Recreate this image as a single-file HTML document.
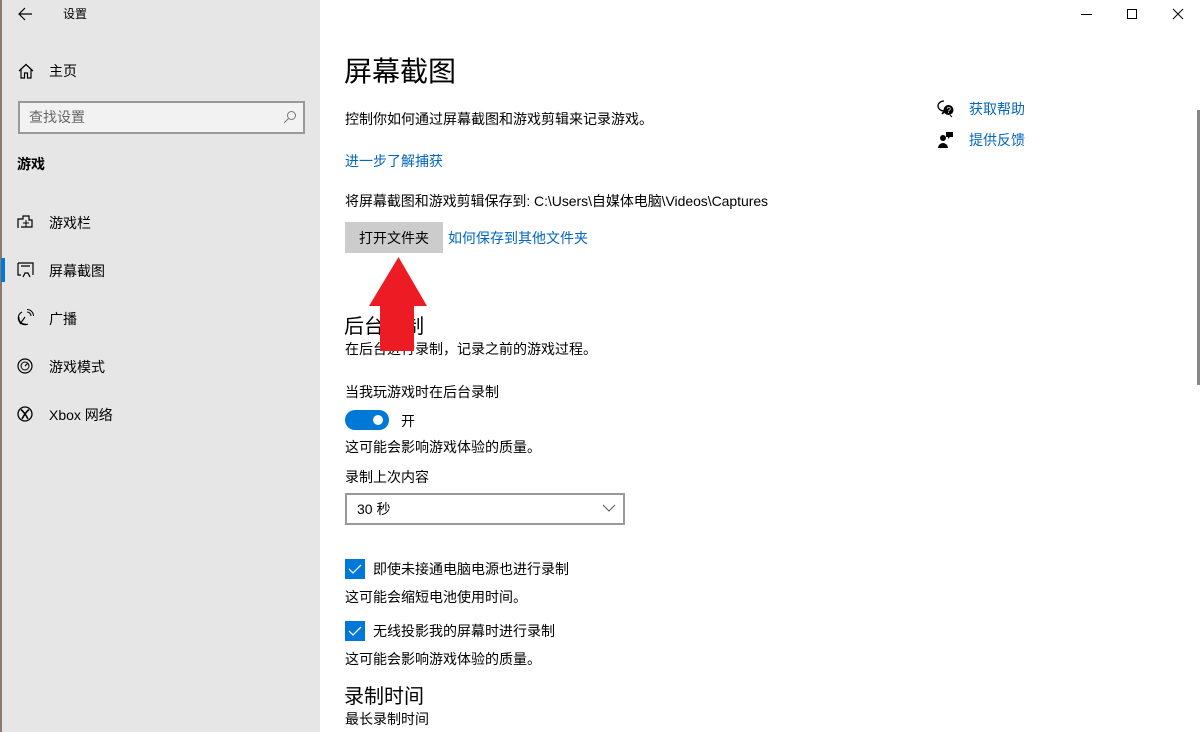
<!DOCTYPE html>
<html><head><meta charset="utf-8"><style>
*{margin:0;padding:0;box-sizing:border-box}
body{width:1202px;height:732px;overflow:hidden;background:#fff;font-family:"Liberation Sans","Noto Sans CJK SC",sans-serif;font-size:14px;color:#000;position:relative}
.a{position:absolute;white-space:nowrap;line-height:20px}
#side{position:absolute;left:0;top:0;width:320px;height:732px;background:#e6e6e6}
.blue{color:#0067c0}
.cb{position:absolute;width:20px;height:20px;background:#0078d7}
</style></head><body>
<div id="side">
  <div style="position:absolute;left:0;top:0;width:2px;height:732px;background:#8a7a70"></div>
  <svg class="a" style="left:17px;top:6px" width="16" height="16" viewBox="0 0 16 16"><path d="M15 8H2M8 2L2 8l6 6" fill="none" stroke="#000" stroke-width="1.2"/></svg>
  <div class="a" style="left:63px;top:4px;font-size:12px">设置</div>
  <svg class="a" style="left:18px;top:63px" width="16" height="16" viewBox="0 0 16 16"><path d="M1 8L8 1.5 15 8M3 6.5V15h3.5v-5h3v5H13V6.5" fill="none" stroke="#000" stroke-width="1.2"/></svg>
  <div class="a" style="left:49px;top:61px">主页</div>
  <div style="position:absolute;left:18px;top:101px;width:287px;height:33px;border:2px solid #999;background:#f2f2f2"></div>
  <div class="a" style="left:29px;top:107px;color:#666">查找设置</div>
  <svg class="a" style="left:283px;top:110px" width="14" height="14" viewBox="0 0 14 14"><circle cx="8.5" cy="5.5" r="4" fill="none" stroke="#777"/><path d="M5.5 8.5L1 13" stroke="#777"/></svg>
  <div class="a" style="left:17px;top:154px;font-weight:bold">游戏</div>
  <svg class="a" style="left:17px;top:214px" width="16" height="16" viewBox="0 0 16 16"><path d="M1 14V5h5V2h6v4h3v7H4" fill="none" stroke="#000" stroke-width="1.2"/><path d="M9 6v7M6 9h6" stroke="#000"/></svg>
  <div class="a" style="left:49px;top:213px">游戏栏</div>
  <div style="position:absolute;left:1px;top:258px;width:4px;height:24px;background:#0078d7"></div>
  <svg class="a" style="left:17px;top:262px" width="17" height="16" viewBox="0 0 17 16"><path d="M1 1h15v12M1 1v12h3M4 4h9M6 15l2-4h3l2 4" fill="none" stroke="#000" stroke-width="1.2"/></svg>
  <div class="a" style="left:49px;top:261px">屏幕截图</div>
  <svg class="a" style="left:17px;top:309px" width="17" height="17" viewBox="0 0 17 17"><path d="M5 3a6 6 0 0 0 6 12M2 8a6 6 0 0 0 7 7M8 8l-5 7M10 3a4 4 0 0 1 4 4M10 0.5a6.5 6.5 0 0 1 6.5 6.5" fill="none" stroke="#000" stroke-width="1.1"/></svg>
  <div class="a" style="left:49px;top:309px">广播</div>
  <svg class="a" style="left:17px;top:358px" width="16" height="16" viewBox="0 0 16 16"><circle cx="8" cy="8" r="7" fill="none" stroke="#000" stroke-width="1.2"/><circle cx="8" cy="8" r="4" fill="none" stroke="#000"/><path d="M8 8l3-3" stroke="#000" stroke-width="1.2"/></svg>
  <div class="a" style="left:49px;top:357px">游戏模式</div>
  <svg class="a" style="left:17px;top:406px" width="16" height="16" viewBox="0 0 16 16"><circle cx="8" cy="8" r="7" fill="none" stroke="#000" stroke-width="1.3"/><path d="M4 3.5Q8 7 11 13M12 3.5Q8 7 5 13" fill="none" stroke="#000" stroke-width="1.5"/></svg>
  <div class="a" style="left:49px;top:405px">Xbox 网络</div>
</div>
<div style="position:absolute;left:1081px;top:14px;width:11px;height:1px;background:#000"></div>
<div style="position:absolute;left:1127px;top:9px;width:10px;height:10px;border:1px solid #000"></div>
<svg class="a" style="left:1172px;top:8px" width="12" height="12" viewBox="0 0 12 12"><path d="M1 1l10 10M11 1L1 11" stroke="#000"/></svg>
<div style="position:absolute;left:1197px;top:110px;width:3px;height:275px;background:#888"></div>

<div class="a" style="left:344px;top:54px;font-size:28px;line-height:36px">屏幕截图</div>
<div class="a" style="left:345px;top:109px">控制你如何通过屏幕截图和游戏剪辑来记录游戏。</div>
<div class="a blue" style="left:345px;top:151px">进一步了解捕获</div>
<div class="a" style="left:345px;top:191px;letter-spacing:-0.05px">将屏幕截图和游戏剪辑保存到: C:\Users\自媒体电脑\Videos\Captures</div>
<div style="position:absolute;left:345px;top:222px;width:98px;height:31px;background:#ccc"></div>
<div class="a" style="left:359px;top:228px">打开文件夹</div>
<div class="a blue" style="left:448px;top:228px">如何保存到其他文件夹</div>

<svg class="a" style="left:937px;top:100px" width="18" height="18" viewBox="0 0 18 18"><path d="M7 1a6 5 0 1 0 0 10l-2 3 4-3" fill="none" stroke="#000" stroke-width="1.3"/><circle cx="11.5" cy="10" r="5" fill="#000"/><text x="9.5" y="13" font-size="8" fill="#fff" font-family="Liberation Sans">?</text><path d="M13 15l2 2" stroke="#000"/></svg>
<div class="a blue" style="left:969px;top:99px">获取帮助</div>
<svg class="a" style="left:937px;top:131px" width="18" height="18" viewBox="0 0 18 18"><circle cx="6" cy="7" r="3" fill="#000"/><path d="M1 17a5 5 0 0 1 10 0z" fill="#000"/><path d="M9 1h7v5h-3l-2 2V6H9z" fill="#000"/></svg>
<div class="a blue" style="left:969px;top:130px">提供反馈</div>

<div class="a" style="left:344px;top:314px;font-size:20px;line-height:26px">后台录制</div>
<div class="a" style="left:345px;top:339px">在后台进行录制，记录之前的游戏过程。</div>
<svg style="position:absolute;left:369px;top:257px" width="59" height="94" viewBox="0 0 59 94"><path d="M29.5 0L58 49H45V94H11V49H0z" fill="#ed1c24"/></svg>
<div class="a" style="left:345px;top:382px">当我玩游戏时在后台录制</div>
<div style="position:absolute;left:345px;top:410px;width:44px;height:20px;border-radius:10px;background:#0078d7"></div>
<div style="position:absolute;left:373px;top:415px;width:10px;height:10px;border-radius:5px;background:#fff"></div>
<div class="a" style="left:401px;top:411px">开</div>
<div class="a" style="left:345px;top:437px">这可能会影响游戏体验的质量。</div>
<div class="a" style="left:345px;top:467px">录制上次内容</div>
<div style="position:absolute;left:345px;top:493px;width:280px;height:32px;border:2px solid #999;background:#fff"></div>
<div class="a" style="left:357px;top:499px">30 秒</div>
<svg class="a" style="left:602px;top:504px" width="14" height="9" viewBox="0 0 14 9"><path d="M1 1l6 6 6-6" fill="none" stroke="#555"/></svg>

<div class="cb" style="left:345px;top:559px"></div>
<svg class="a" style="left:345px;top:559px" width="20" height="20" viewBox="0 0 20 20"><path d="M4 10l4 4 8-8" fill="none" stroke="#fff" stroke-width="1.3"/></svg>
<div class="a" style="left:373px;top:559px">即使未接通电脑电源也进行录制</div>
<div class="a" style="left:345px;top:587px">这可能会缩短电池使用时间。</div>
<div class="cb" style="left:345px;top:621px"></div>
<svg class="a" style="left:345px;top:621px" width="20" height="20" viewBox="0 0 20 20"><path d="M4 10l4 4 8-8" fill="none" stroke="#fff" stroke-width="1.3"/></svg>
<div class="a" style="left:373px;top:621px">无线投影我的屏幕时进行录制</div>
<div class="a" style="left:345px;top:649px">这可能会影响游戏体验的质量。</div>
<div class="a" style="left:344px;top:684px;font-size:20px;line-height:26px">录制时间</div>
<div class="a" style="left:345px;top:709px">最长录制时间</div>
</body></html>
